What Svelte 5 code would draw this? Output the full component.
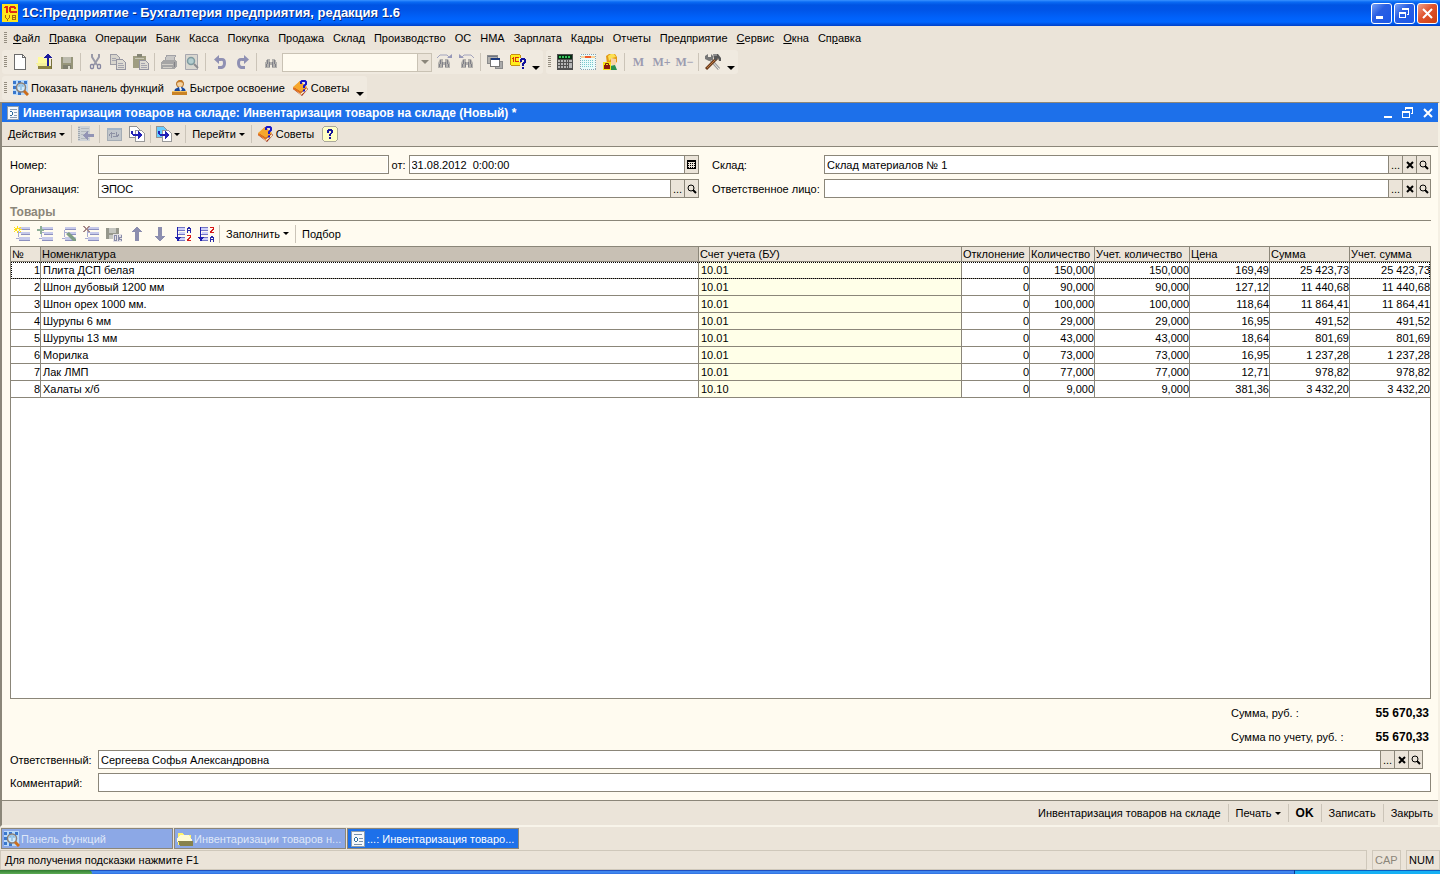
<script>
  const menu = [
    { text: 'Файл', key: 0 },
    { text: 'Правка', key: 0 },
    { text: 'Операции' },
    { text: 'Банк' },
    { text: 'Касса' },
    { text: 'Покупка' },
    { text: 'Продажа' },
    { text: 'Склад' },
    { text: 'Производство' },
    { text: 'ОС' },
    { text: 'НМА' },
    { text: 'Зарплата' },
    { text: 'Кадры' },
    { text: 'Отчеты' },
    { text: 'Предприятие' },
    { text: 'Сервис', key: 0 },
    { text: 'Окна', key: 0 },
    { text: 'Справка', key: 2 }
  ];

  const fileTools = [
    ['new', 'Новый'], ['open', 'Открыть'], ['save', 'Сохранить'], null,
    ['cut', 'Вырезать'], ['copy', 'Копировать'], ['paste', 'Вставить'], null,
    ['print', 'Печать'], ['preview', 'Просмотр'], null,
    ['undo', 'Отменить'], ['redo', 'Вернуть'], null,
    ['find', 'Найти']
  ];
  const findTools = [
    ['findNext', 'Найти далее'], ['findPrev', 'Найти назад'], null,
    ['windows', 'Окна'], ['help1c', 'Справка']
  ];
  const serviceTools = [
    ['calc', 'Калькулятор'], ['calendar', 'Календарь'], ['user', 'Пользователь'], null,
    ['m', 'M'], ['mPlus', 'M+'], ['mMinus', 'M-'], null,
    ['tools', 'Настройка']
  ];
  const tableTools = [
    ['rowAdd', 'Добавить'], ['rowCopy', 'Скопировать'], ['rowEdit', 'Изменить'],
    ['rowDelete', 'Удалить'], ['rowSave', 'Закончить'], ['up', 'Вверх'], ['down', 'Вниз'],
    ['sortAsc', 'По возрастанию'], ['sortDesc', 'По убыванию']
  ];

  // icons with diagonals and circles are drawn smooth, the rest on the pixel grid
  const smooth = ['panel', 'learn', 'tips', 'tools', 'cut', 'undo', 'redo', 'preview', 'rowEdit', 'findNext', 'findPrev', 'user'];

  const columns = [
    { title: '№', width: 30 },
    { title: 'Номенклатура' },
    { title: 'Счет учета (БУ)', width: 263 },
    { title: 'Отклонение', width: 68 },
    { title: 'Количество', width: 65 },
    { title: 'Учет. количество', width: 95 },
    { title: 'Цена', width: 80 },
    { title: 'Сумма', width: 80 },
    { title: 'Учет. сумма', width: 80 }
  ];

  const rows = [
    ['1', 'Плита ДСП белая', '10.01', '0', '150,000', '150,000', '169,49', '25 423,73', '25 423,73'],
    ['2', 'Шпон дубовый 1200 мм', '10.01', '0', '90,000', '90,000', '127,12', '11 440,68', '11 440,68'],
    ['3', 'Шпон орех 1000 мм.', '10.01', '0', '100,000', '100,000', '118,64', '11 864,41', '11 864,41'],
    ['4', 'Шурупы 6 мм', '10.01', '0', '29,000', '29,000', '16,95', '491,52', '491,52'],
    ['5', 'Шурупы 13 мм', '10.01', '0', '43,000', '43,000', '18,64', '801,69', '801,69'],
    ['6', 'Морилка', '10.01', '0', '73,000', '73,000', '16,95', '1 237,28', '1 237,28'],
    ['7', 'Лак ЛМП', '10.01', '0', '77,000', '77,000', '12,71', '978,82', '978,82'],
    ['8', 'Халаты х/б', '10.10', '0', '9,000', '9,000', '381,36', '3 432,20', '3 432,20']
  ];

  let selected = 0;
  let search = '';
  let number = '';
  let date = '31.08.2012  0:00:00';
  let organization = 'ЭПОС';
  let store = 'Склад материалов № 1';
  let person = '';
  let responsible = 'Сергеева Софья Александровна';
  let comment = '';
</script>

{#snippet binoculars()}
  <path d="M4 5h3v3h2V5h3l2 4v5H9v-3H7v3H2V9z" fill="#b3b1ad" />
  <path d="M4 6h1v4H4zM11 6h1v4h-1zM6 8h1v5H6zM9 8h1v5H9zM3 10h1v3H3zM12 10h1v3h-1z" fill="#808088" />
{/snippet}

{#snippet listRows()}
  <path d="M5 1h11v3H5zM7 6h9v3H7zM5 11h11v4H5z" fill="#c6c9ea" />
  <path d="M5 3h11v1H5zM7 8h9v1H7zM5 14h11v1H5z" fill="#8d90be" />
  <path d="M4 4h1v7H4zM5 6h2v1H5zM2 12h3v1H2z" fill="#a9acd2" />
{/snippet}

{#snippet icon(name)}
  <svg class="icon" width="16" height="16" viewBox="0 0 16 16" aria-hidden="true" shape-rendering={smooth.includes(name) ? 'auto' : 'crispEdges'}>
    {#if name === 'new'}
      <path d="M1.500.5h8l3 3v12h-11z" fill="#fff" stroke="#6c6c6c" />
      <path d="M9.500.5v3h3" fill="none" stroke="#6c6c6c" />
    {:else if name === 'open'}
      <path d="M2 3h5l1 2h6v9H2z" fill="#fffb9a" />
      <path d="M0 9h12l3 6H3z" fill="#f5f19b" />
      <path d="M2 12h13v3H2z" fill="#8c8340" />
      <path d="M15 5h1v10h-1z" fill="#77713a" />
      <path d="M11 12V4H8V3h1V2h1V1h1V0h2v1h1v1h1v1h1v1h-3v8z" fill="#1c1c9c" />
    {:else if name === 'save'}
      <path d="M2 3h12v12H2z" fill="#96957a" />
      <path d="M4 3h8v6H4z" fill="#bcbbae" />
      <path d="M4 11h8v4H4z" fill="#7f7f70" />
      <path d="M9 12h2v3H9z" fill="#dddcd0" />
    {:else if name === 'cut'}
      <path d="M5 0v3l5 8M12 0v3l-5 8" fill="none" stroke="#9a9aa8" stroke-width="2" />
      <rect x="3.500" y="10.500" width="3" height="4" rx="1" fill="none" stroke="#8686a0" stroke-width="1.300" />
      <rect x="10.500" y="10.500" width="3" height="4" rx="1" fill="none" stroke="#8686a0" stroke-width="1.300" />
    {:else if name === 'copy'}
      <path d="M.5.5h6l3 3v7h-9z" fill="#d8d5cd" stroke="#9c9ca4" />
      <path d="M6.500 5.500h6l3 3v7h-9z" fill="#dedbd3" stroke="#9595a0" />
      <path d="M2 4.500h4M2 6.500h4M8 9.500h5M8 11.500h6M8 13.500h6" stroke="#a5a5af" />
    {:else if name === 'paste'}
      <path d="M0 2h13v12H0z" fill="#9f9d82" />
      <path d="M4 0h5v3H4z" fill="#868676" />
      <path d="M2 4h9v1H2z" fill="#c8c6b5" />
      <path d="M6.500 6.500h6l3 3v6h-9z" fill="#dedbd3" stroke="#9595a0" />
      <path d="M8 9.500h4M8 11.500h6M8 13.500h6" stroke="#a5a5af" />
    {:else if name === 'print'}
      <path d="M5.500 1.500h9l-2 6h-9z" fill="#c8c7c5" stroke="#a2a2a6" />
      <path d="M0 8l3-2h12l1 2v5l-3 2H0z" fill="#a5a5a5" />
      <path d="M1 10.500h11M2 13.500h9" stroke="#d2cfc8" />
      <path d="M13 8h1v5h-1z" fill="#838388" />
    {:else if name === 'preview'}
      <path d="M1.500.5h12v15h-12z" fill="#d9d7d0" stroke="#a7a7ae" />
      <circle cx="7" cy="7" r="3.500" fill="#b3cdcf" stroke="#7f9ba0" stroke-width="1.500" />
      <path d="M10 10l4 4" stroke="#8c8c90" stroke-width="2" />
    {:else if name === 'undo'}
      <path d="M2 5.500L7 1v3h3q4 0 4 5t-4 6H6v-3h3q2 0 2-3T9 7H7v3z" fill="#8f90b3" />
    {:else if name === 'redo'}
      <path d="M14 5.500L9 1v3H6q-4 0-4 5t4 6h4v-3H7q-2 0-2-3t2-2h2v3z" fill="#8f90b3" />
    {:else if name === 'find'}
      {@render binoculars()}
    {:else if name === 'findNext'}
      {@render binoculars()}
      <path d="M1 4l3-3h7l3 3" fill="none" stroke="#a3a4bd" />
      <path d="M11 4h5V0z" fill="#9798b8" />
    {:else if name === 'findPrev'}
      {@render binoculars()}
      <path d="M2 4l3-3h7l3 3" fill="none" stroke="#a3a4bd" />
      <path d="M5 4H0V0z" fill="#9798b8" />
    {:else if name === 'windows'}
      <path d="M.5 1.500h10v8H.5z" fill="#b2b1ae" stroke="#8b8b8b" />
      <path d="M1 2h9v1H1z" fill="#6e7583" />
      <path d="M8.500 7.500h7v7h-7z" fill="#aaa" stroke="#8b8b8b" />
      <path d="M3.500 4.500h9v8h-9z" fill="#fff" stroke="#757575" />
      <path d="M4 4h9v2H4z" fill="#1b3a80" />
    {:else if name === 'help1c'}
      <path d="M.5 1.500l1-1h8l1 1v9l-1 1h-8l-1-1z" fill="#ffee1c" stroke="#c78f10" />
      <path d="M2 4h1V3h1v5H3V5H2zM5 3h4v1H6v3h4v1H5z" fill="#d8300f" />
      <path d="M9 4h6l1 1v4l-2 2v5h-4v-6l1-2H9z" fill="#f0eae0" />
      <path d="M10 5h1V4h4v1h1v4h-1v1h-1v2h-2V9h1V8h1V6h-2v2h-2zM12 13h2v2h-2z" fill="#12129c" />
    {:else if name === 'calc'}
      <path d="M0 0h16v16H0z" fill="#505050" />
      <path d="M1 1h14v4H1z" fill="#062d12" />
      <path d="M2 3h12" stroke="#35c65c" stroke-width="2" stroke-dasharray="2 1" />
      <path d="M1 7h10M1 10h10M1 13h10" stroke="#b5b5b5" stroke-width="2" stroke-dasharray="2 1" />
      <path d="M12 6h3v2h-3zM12 9h3v5h-3z" fill="#b7b7b7" />
    {:else if name === 'calendar'}
      <path d="M0 0h16v16H0z" fill="#e9fbfb" />
      <path d="M.5.5h15v15H.5z" fill="none" stroke="#8e9fac" stroke-dasharray="1 1" />
      <path d="M1 2h14v2H1z" fill="#fad29a" />
      <path d="M5 2h6v2H5z" fill="#f05b2c" />
      <path d="M2 6.500h12M2 8.500h12M2 10.500h12M2 12.500h12" stroke="#79c8cc" stroke-dasharray="1 1" />
    {:else if name === 'user'}
      <path d="M3 2l3-2h6l2 3v5l-3 2H4z" fill="#e39a14" />
      <path d="M5 2l3-2h3l2 3-4 1-3 3z" fill="#fbe054" />
      <path d="M8 4l5 1v5l-2 2-3-2z" fill="#f8d2a4" />
      <path d="M7 12l5-1 2 5H7z" fill="#2a9050" />
      <path d="M0 8h8v8H0z" fill="#f6e51a" />
      <path d="M2.500 11V9.500h3V11" fill="none" stroke="#7d1808" />
      <path d="M1 11h6v4H1z" fill="#8d1d0c" />
    {:else if name === 'tools'}
      <path d="M5 5l9 10" stroke="#9b9b9b" stroke-width="3" />
      <path d="M5 5l9 10" stroke="#eee" />
      <path d="M12 4L1 15" stroke="#6d3c1c" stroke-width="3" />
      <path d="M11 5L2 14" stroke="#bb7a42" />
      <path d="M0 2l3-2v3h3V0l2 2v4L4 7 0 5z" fill="#777" />
      <path d="M8 0h5l3 4v3h-2l-1-3-2 3-2-2z" fill="#575757" />
      <path d="M8 1h4" stroke="#bdbdbd" />
    {:else if name === 'panel'}
      <path d="M0 0h15v15H0z" fill="#b9dafa" />
      <path d="M0 1h3v3H0zM5 1h3v3H5zM11 1h3v3h-3zM0 6h3v3H0zM0 11h3v3H0zM5 12h3v3H5z" fill="#3977cc" />
      <circle cx="8" cy="7.500" r="4.500" fill="#cfeafc" stroke="#8a7f76" stroke-width="1.500" />
      <path d="M6 7V5h4v2M8 6v4" fill="none" stroke="#71a9d6" />
      <path d="M11 11l4 4" stroke="#cc6e1c" stroke-width="3" />
    {:else if name === 'learn'}
      <circle cx="8" cy="4" r="3.500" fill="#f6d3a0" stroke="#b06c22" />
      <path d="M4 3l3-3h3l2 3-4-1z" fill="#c47c2a" />
      <path d="M2 12l1-3 4-2h3l3 2 1 3z" fill="#17479d" />
      <path d="M7 7h2l1 3-2 1z" fill="#e8f0fb" />
      <path d="M0 11h15v4H0z" fill="#c98326" />
      <path d="M0 11h15v1H0z" fill="#f4c363" />
    {:else if name === 'tips'}
      <path d="M0 9l7-8 8 8-6 7z" fill="#a3331a" />
      <path d="M0 7l7-6 7 6-6 5z" fill="#f6a72c" />
      <path d="M0 8l8 5 6-5v2l-6 5z" fill="#fff0c5" />
      <path d="M0 7l8 5v2L0 9z" fill="#e2711d" />
      <path d="M8 4V2l1-1h3l1 1v2l-2 2v2M11 9.500v2" fill="none" stroke="#1717c8" stroke-width="2" />
    {:else if name === 'document'}
      <path d="M1 0h14v16H1z" fill="#8c9dae" />
      <path d="M2 1h12v14H2z" fill="#f5f8fb" />
      <path d="M4 3.500h8M9 7.500h4M9 10.500h4M4 13.500h8" stroke="#7890aa" />
      <path d="M5 6h2v1h1v3H7v1H5v-1H4V7h1z" fill="#2d6c9c" />
      <path d="M5 7h2v3H5z" fill="#fff" />
    {:else if name === 'folder'}
      <path d="M1 2h5l1 2h7v10H1z" fill="#fff36d" />
      <path d="M0 8l3-4h9l3 5v2H0z" fill="#fffbd5" />
      <path d="M1 10h15v5H3z" fill="#87824d" />
    {:else if name === 'toList'}
      <path d="M0 0h12v15H0z" fill="#cdd1d5" />
      <path d="M1 1v13" stroke="#a1a8ae" stroke-width="2" stroke-dasharray="1 1" />
      <path d="M3 2.500h8M3 5.500h8M3 8.500h8M3 12.500h8" stroke="#b2b8be" />
      <path d="M5 9h1V8h1V7h1V6h1V5h1v3h6v3h-6v3H9v-1H8v-1H7v-1H6v-1H5z" fill="#9294b5" />
    {:else if name === 'refresh'}
      <path d="M1 2h14v12H1z" fill="#c1c6cb" stroke="#a4acb4" />
      <path d="M1 3h14" stroke="#a2b4c7" stroke-width="2" />
      <path d="M5.500 12V7.500H9M3 9.500l2.500-3M10.500 5.500v5H7M13 8.500l-2.500 3" fill="none" stroke="#8d91a4" />
    {:else if name === 'copyDoc' || name === 'basedOn'}
      <path d="M.5.5h7l3 3v8H.5z" fill={name === 'basedOn' ? '#67ccff' : '#fff'} stroke="#929292" />
      <path d="M6.500 4.500h6l3 3v8h-9z" fill="#fff" stroke="#999" />
      <path d="M2 5h2v3h5V5h1v1h1v1h1v1h1v2h-1v1h-1v1h-1v1H9v-3H4V9H3V8H2z" fill="#2222b5" />
    {:else if name === 'rowAdd'}
      {@render listRows()}
      <path d="M3 0h1v2h2V1h1v1H6v1h2v1H6v1h1v1H6V5H4v2H3V5H1v1H0V5h1V4H0V3h1V2H0V1h1v1h2z" fill="#ffdf18" />
      <path d="M3 3h2v2H3z" fill="#fffbd0" />
    {:else if name === 'rowCopy'}
      {@render listRows()}
      <path d="M0 3h7v2H0zM3 0h2v8H3z" fill="#8fae97" />
    {:else if name === 'rowEdit'}
      {@render listRows()}
      <path d="M6 8l3-2 7 7v2h-3z" fill="#7f9d84" />
    {:else if name === 'rowDelete'}
      {@render listRows()}
      <path d="M0 0h2v1h1v1h1V1h1V0h2v1H6v1H5v2h1v1h1v1H5V5H4V4H3v1H2v1H0V5h1V4h1V2H1V1H0z" fill="#a58888" />
    {:else if name === 'rowSave'}
      <path d="M0 2h13v11H0z" fill="#96978c" />
      <path d="M3 2h7v5H3zM3 9h6v4H3z" fill="#c5c6c0" />
      <path d="M7 8h9v8H7z" fill="#e4e1e4" />
      <path d="M8.500 9.500h2v5h-2zM12.500 9v6M15.500 9v2h-2v2h2v2" fill="none" stroke="#898ca8" />
    {:else if name === 'up'}
      <path d="M7 1h2v1h1v1h1v1h1v1h1v1h-3v9H6V6H3V5h1V4h1V3h1V2h1z" fill="#8c8eaf" />
    {:else if name === 'down'}
      <path d="M7 15h2v-1h1v-1h1v-1h1v-1h1v-1h-3V1H6v9H3v1h1v1h1v1h1v1h1z" fill="#8c8eaf" />
    {:else if name === 'sortAsc' || name === 'sortDesc'}
      <path d="M2 1h8v3H2zM4 6h6v3H4zM4 11h6v4H4z" fill="#cdd0fa" />
      <path d="M2 1h8v1H2zM3 4h7v1H3zM3 8h7v1H3zM3 11h7v1H3zM4 14h6v1H4z" fill="#7376c4" />
      <path d="M2 1h1v10h3v1H5v1H4v2H2v-2H1v-1H0v-1h2z" fill="#1e1fae" />
      <path d="M12.500 7V2.500h3V7M12 4.500h4M13 1.500h2" fill="none" stroke="#2829aa" transform={name === 'sortDesc' ? 'translate(0 9)' : null} />
      <path d="M12 9.500h3.500v1.500h-1v1h-1v1h-1v1.500H16" fill="none" stroke="#d71919" transform={name === 'sortDesc' ? 'translate(0 -8)' : null} />
    {:else if name === 'help'}
      <path d="M2.500.5h11l2 2v11l-2 2h-11l-2-2v-11z" fill="#ffffc4" stroke="#aaa89c" />
      <path d="M5 4h1V3h4v1h1v3h-1v1H9v2H7V8h1V7h1V5H7v2H5zM7 11h2v2H7z" fill="#15159b" />
    {/if}
  </svg>
{/snippet}

{#snippet tools(list)}
  {#each list as item}
    {#if !item}
      <span class="sep"></span>
    {:else}
      <button class="tool" aria-label={item[1]}>
        {#if item[0] === 'm'}
          <span class="mem">M</span>
        {:else if item[0] === 'mPlus'}
          <span class="mem">M+</span>
        {:else if item[0] === 'mMinus'}
          <span class="mem">M−</span>
        {:else}
          {@render icon(item[0])}
        {/if}
      </button>
    {/if}
  {/each}
{/snippet}

{#snippet pick()}
  <button class="pick" aria-label="Выбрать">...</button>
{/snippet}

{#snippet clear()}
  <button class="pick" aria-label="Очистить">
    <svg width="8" height="8" viewBox="0 0 8 8"><path d="M1 1l6 6M7 1L1 7" stroke="#000" stroke-width="2" /></svg>
  </button>
{/snippet}

{#snippet lens()}
  <button class="pick" aria-label="Открыть">
    <svg width="10" height="10" viewBox="0 0 10 10">
      <circle cx="4" cy="4" r="3" fill="none" stroke="#000" />
      <path d="M6 6l3 3" stroke="#000" stroke-width="2" />
    </svg>
  </button>
{/snippet}

<div class="app">
  <header class="titlebar">
    <svg class="logo" width="16" height="18" viewBox="0 0 16 18" shape-rendering="crispEdges">
      <rect width="16" height="18" rx="1" fill="#ffe61c" />
      <path d="M2 3h1V2h3v7H4V4H2zM8 2h5v1h1v2h-2V4H9v3h6v2H8V8H7V3h1z" fill="#e02a12" />
      <path d="M3.500 11v2l2 3 2-3v-2M10.500 11.500h3v4h-3zM10 13.500h4" fill="none" stroke="#a8660f" />
    </svg>
    <h1>1С:Предприятие - Бухгалтерия предприятия, редакция 1.6</h1>
    <div class="caption-buttons">
      <button class="caption" aria-label="Свернуть">
        <svg width="19" height="19" viewBox="0 0 19 19"><path d="M4 12h7v3H4z" fill="#fff" /></svg>
      </button>
      <button class="caption" aria-label="Восстановить">
        <svg width="19" height="19" viewBox="0 0 19 19" shape-rendering="crispEdges">
          <path d="M7 4h7v2H7zM4 8h7v2H4z" fill="#fff" />
          <path d="M7.500 6V4.500h6v6H12M4.500 8.500h6v5h-6z" fill="none" stroke="#fff" />
        </svg>
      </button>
      <button class="caption close" aria-label="Закрыть">
        <svg width="19" height="19" viewBox="0 0 19 19"><path d="M5 5l9 9M14 5l-9 9" stroke="#fff" stroke-width="2" /></svg>
      </button>
    </div>
  </header>

  <nav class="menu">
    <span class="grip"></span>
    {#each menu as item}
      <a href="#menu">{#if item.key === undefined}{item.text}{:else}{item.text.slice(0, item.key)}<u>{item.text[item.key]}</u>{item.text.slice(item.key + 1)}{/if}</a>
    {/each}
  </nav>

  <div class="bars">
    <div class="bar">
      <span class="grip"></span>
      {@render tools(fileTools)}
      <div class="combo">
        <input type="text" aria-label="Поиск" bind:value={search} />
        <button aria-label="История поиска"><span class="arrow muted"></span></button>
      </div>
      {@render tools(findTools)}
      <button class="more" aria-label="Еще"><span class="arrow big"></span></button>
    </div>
    <div class="bar">
      <span class="grip"></span>
      {@render tools(serviceTools)}
      <button class="more" aria-label="Еще"><span class="arrow big"></span></button>
    </div>
  </div>

  <div class="bars">
    <div class="bar">
      <span class="grip"></span>
      <button class="command">{@render icon('panel')}Показать панель функций</button>
      <button class="command">{@render icon('learn')}Быстрое освоение</button>
      <button class="command">{@render icon('tips')}Советы</button>
      <button class="more" aria-label="Еще"><span class="arrow big"></span></button>
    </div>
  </div>

  <main class="window">
    <div class="window-title">
      {@render icon('document')}
      <h2>Инвентаризация товаров на складе: Инвентаризация товаров на складе (Новый) *</h2>
      <button aria-label="Свернуть окно">
        <svg width="12" height="12" viewBox="0 0 12 12"><path d="M2 9h8v2H2z" fill="#fff" /></svg>
      </button>
      <button aria-label="Восстановить окно">
        <svg width="12" height="12" viewBox="0 0 12 12" shape-rendering="crispEdges">
          <path d="M3.500 3V.5h7v6H9M.5 4.500h7v6h-7z" fill="none" stroke="#fff" />
          <path d="M3 0h8v2H3zM0 4h8v2H0z" fill="#fff" />
        </svg>
      </button>
      <button aria-label="Закрыть окно">
        <svg width="12" height="12" viewBox="0 0 12 12"><path d="M2 2l8 8M10 2l-8 8" stroke="#fff" stroke-width="2" /></svg>
      </button>
    </div>

    <div class="form-bar">
      <button class="text-button">Действия<span class="arrow"></span></button>
      <span class="sep"></span>
      <button class="tool" aria-label="Найти в списке">{@render icon('toList')}</button>
      <span class="sep"></span>
      <button class="tool" aria-label="Перечитать">{@render icon('refresh')}</button>
      <button class="tool" aria-label="Скопировать">{@render icon('copyDoc')}</button>
      <span class="sep"></span>
      <button class="tool with-arrow" aria-label="Ввести на основании">{@render icon('basedOn')}<span class="arrow"></span></button>
      <span class="sep"></span>
      <button class="text-button">Перейти<span class="arrow"></span></button>
      <span class="sep"></span>
      <button class="command">{@render icon('tips')}Советы</button>
      <button class="tool" aria-label="Справка">{@render icon('help')}</button>
    </div>

    <div class="form">
      <div class="fields">
        <div class="row">
          <label class="wide" for="number">Номер:</label>
          <div class="field"><input id="number" class="readonly" type="text" bind:value={number} readonly /></div>
          <label class="from" for="date">от:</label>
          <div class="field">
            <input id="date" type="text" bind:value={date} />
            <button class="pick" aria-label="Календарь">
              <svg width="9" height="9" viewBox="0 0 9 9" shape-rendering="crispEdges">
                <path d="M0 0h9v9H0z" />
                <path d="M1 2h7v6H1z" fill="#ebe4d9" />
                <path d="M1 3.500h7M1 5.500h7M1 7.500h7" stroke="#000" stroke-dasharray="1 1" />
              </svg>
            </button>
          </div>
        </div>
        <div class="row">
          <label class="store" for="store">Склад:</label>
          <div class="field">
            <input id="store" type="text" bind:value={store} />
            {@render pick()}{@render clear()}{@render lens()}
          </div>
        </div>
        <div class="row">
          <label class="wide" for="organization">Организация:</label>
          <div class="field">
            <input id="organization" type="text" bind:value={organization} />
            {@render pick()}{@render lens()}
          </div>
        </div>
        <div class="row">
          <label class="store" for="person">Ответственное лицо:</label>
          <div class="field">
            <input id="person" type="text" bind:value={person} />
            {@render pick()}{@render clear()}{@render lens()}
          </div>
        </div>
      </div>

      <h3>Товары</h3>

      <div class="table-bar">
        {@render tools(tableTools)}
        <span class="sep"></span>
        <button class="text-button">Заполнить<span class="arrow"></span></button>
        <span class="sep"></span>
        <button class="text-button">Подбор</button>
      </div>

      <div class="table-box">
        <table>
          <colgroup>
            {#each columns as column}
              <col style={column.width ? `width: ${column.width}px` : null} />
            {/each}
          </colgroup>
          <thead>
            <tr>
              {#each columns as column, i}
                <th class:active={i === 1}>{column.title}</th>
              {/each}
            </tr>
          </thead>
          <tbody>
            {#each rows as row, r}
              <tr class:selected={r === selected} on:click={() => (selected = r)}>
                {#each row as cell, i}
                  <td class:num={i !== 1 && i !== 2} class:account={i === 2}>{cell}</td>
                {/each}
              </tr>
            {/each}
          </tbody>
        </table>
      </div>

      <dl class="totals">
        <dt>Сумма, руб. :</dt>
        <dd>55 670,33</dd>
        <dt>Сумма по учету, руб. :</dt>
        <dd>55 670,33</dd>
      </dl>

      <div class="row short">
        <label class="wide" for="responsible">Ответственный:</label>
        <div class="field">
          <input id="responsible" type="text" bind:value={responsible} />
          {@render pick()}{@render clear()}{@render lens()}
        </div>
      </div>
      <div class="row">
        <label class="wide" for="comment">Комментарий:</label>
        <div class="field"><input id="comment" type="text" bind:value={comment} /></div>
      </div>
    </div>

    <div class="actions">
      <button class="text-button">Инвентаризация товаров на складе</button>
      <span class="sep"></span>
      <button class="text-button">Печать<span class="arrow"></span></button>
      <span class="sep"></span>
      <button class="text-button ok">OK</button>
      <span class="sep"></span>
      <button class="text-button">Записать</button>
      <span class="sep"></span>
      <button class="text-button">Закрыть</button>
    </div>
  </main>

  <div class="tabs">
    <button class="tab">{@render icon('panel')}<span>Панель функций</span></button>
    <button class="tab">{@render icon('folder')}<span>Инвентаризации товаров н...</span></button>
    <button class="tab current">{@render icon('document')}<span>...: Инвентаризация товаро...</span></button>
  </div>

  <footer class="status">
    <span class="hint">Для получения подсказки нажмите F1</span>
    <span class="lamp off">CAP</span>
    <span class="lamp">NUM</span>
  </footer>

  <div class="taskbar">
    <span class="start"></span>
    <span class="tray"></span>
  </div>
</div>

<style>
  :global(body) {
    margin: 0;
    background: #ebe4d9;
  }

  .app {
    display: flex;
    flex-direction: column;
    min-height: 100vh;
    font-family: 'Liberation Sans', Arial, sans-serif;
    font-size: 11px;
    line-height: 14px;
    color: #000;
  }

  .app * {
    box-sizing: border-box;
  }

  button,
  input {
    font: inherit;
    color: inherit;
    margin: 0;
    padding: 0;
    border: none;
    background: none;
    border-radius: 0;
  }

  button {
    display: flex;
    align-items: center;
    justify-content: center;
    white-space: nowrap;
  }

  svg {
    display: block;
    flex: none;
  }

  h1,
  h2,
  h3 {
    margin: 0;
  }

  .titlebar {
    display: flex;
    align-items: center;
    height: 26px;
    padding: 0 2px;
    background: linear-gradient(#3a93ff 0, #0a6bf4 2px, #0054e3 5px, #0055e8 10px, #0062fb 18px, #0066ff 22px, #0040c8 26px);
  }

  h1 {
    flex: 1;
    margin-left: 4px;
    font-size: 13px;
    line-height: 18px;
    color: #fff;
    text-shadow: 1px 1px 0 #0a2a80;
  }

  .caption-buttons {
    display: flex;
    gap: 2px;
  }

  .caption {
    width: 21px;
    height: 21px;
    border: 1px solid #fff;
    border-radius: 3px;
    background: linear-gradient(135deg, #7ba2f5, #2a5fe3 40%, #1b57e8);
  }

  .caption.close {
    background: linear-gradient(135deg, #f0a18c, #e0532c 45%, #cd3f10);
  }

  .menu {
    display: flex;
    align-items: center;
    gap: 9px;
    height: 24px;
    padding-left: 2px;
  }

  .menu a {
    color: #000;
    text-decoration: none;
  }

  .grip {
    flex: none;
    width: 3px;
    height: 12px;
    margin: 0 2px;
    background: repeating-linear-gradient(#948d80 0 1px, transparent 1px 2px);
  }

  .menu .grip {
    margin-right: -3px;
  }

  .bars {
    display: flex;
    gap: 3px;
    height: 26px;
    padding-left: 2px;
  }

  .bar {
    display: flex;
    align-items: center;
    height: 24px;
    background: #f0eae0;
    border-radius: 3px;
  }

  .tool {
    width: 23px;
    height: 22px;
    flex: none;
  }

  .tool.with-arrow {
    width: 30px;
    gap: 2px;
  }

  .mem {
    font: bold 12px 'Liberation Serif', serif;
    color: #9c9cb0;
  }

  .sep {
    flex: none;
    width: 1px;
    height: 18px;
    margin: 0 2px;
    background: #cbc4b8;
  }

  .combo {
    display: flex;
    width: 150px;
    height: 19px;
    border: 1px solid #c9c2b4;
    background: #fffbf0;
  }

  .combo input {
    flex: 1;
    min-width: 0;
  }

  .combo button {
    width: 14px;
    border-left: 1px solid #c9c2b4;
    background: #ebe4d9;
  }

  .arrow {
    flex: none;
    border: 3px solid transparent;
    border-top-color: #000;
    border-bottom: none;
  }

  .arrow.big {
    border-width: 4px;
    border-bottom: none;
  }

  .arrow.muted {
    border-width: 4px;
    border-bottom: none;
    border-top-color: #8b867b;
  }

  .more {
    width: 14px;
    height: 24px;
    padding-bottom: 4px;
    align-items: flex-end;
  }

  .command {
    height: 22px;
    gap: 2px;
    padding: 0 4px;
  }

  .text-button {
    height: 22px;
    gap: 3px;
    padding: 0 4px;
  }

  .window {
    flex: 1;
    display: flex;
    flex-direction: column;
    border: solid #8b8679;
    border-width: 1px 0 0 2px;
    border-right: 2px solid #f5f0e4;
    border-bottom: 2px solid #f8f4ea;
  }

  .window-title {
    display: flex;
    align-items: center;
    height: 19px;
    padding-left: 2px;
    color: #fff;
    background: #1d70ea;
  }

  .window-title .icon {
    width: 14px;
    height: 14px;
    margin-left: 2px;
  }

  h2 {
    flex: 1;
    margin-left: 3px;
    font-size: 12px;
    line-height: 16px;
  }

  .window-title button {
    width: 20px;
    height: 16px;
  }

  .form-bar {
    display: flex;
    align-items: center;
    height: 25px;
    padding: 0 2px;
    border-bottom: 1px solid #8b8679;
  }

  .form {
    flex: 1;
    display: flex;
    flex-direction: column;
    padding: 8px 7px 8px 8px;
    background: #fffbf0;
    border-bottom: 1px solid #8b8679;
  }

  .fields {
    display: grid;
    grid-template-columns: 689fr 719fr;
    gap: 5px 13px;
  }

  .row {
    display: flex;
    align-items: center;
  }

  .row.short {
    margin-right: 8px;
    margin-bottom: 4px;
  }

  .wide {
    flex: none;
    width: 88px;
  }

  .from {
    flex: none;
    width: 20px;
    padding-left: 3px;
  }

  .store {
    flex: none;
    width: 112px;
  }

  .field {
    flex: 1;
    display: flex;
    height: 19px;
    border: 1px solid #8b8679;
    background: #fff;
  }

  .field input {
    flex: 1;
    min-width: 0;
    padding: 0 2px;
    white-space: pre;
  }

  .field input.readonly {
    margin: 1px;
    background: #fffbf0;
  }

  .pick {
    flex: none;
    width: 14px;
    border-left: 1px solid #8b8679;
    background: #ebe4d9;
  }

  h3 {
    margin-top: 7px;
    border-bottom: 1px solid #8b8679;
    font-size: 12px;
    line-height: 15px;
    color: #8b8679;
  }

  .table-bar {
    display: flex;
    align-items: center;
    height: 25px;
  }

  .table-box {
    flex: 1;
    border: 1px solid #8b8679;
    background: #fff;
  }

  table {
    width: 100%;
    table-layout: fixed;
    border-collapse: separate;
    border-spacing: 0;
  }

  th,
  td {
    height: 17px;
    padding: 0 1px;
    border: solid #8b8679;
    border-width: 0 1px 1px 0;
    text-align: left;
    font-weight: normal;
    line-height: 14px;
    white-space: nowrap;
    overflow: hidden;
  }

  th:last-child,
  td:last-child {
    border-right: none;
  }

  th {
    height: 15px;
    background: #ebe4d9;
  }

  th.active {
    background: #c8c0b4;
  }

  td {
    padding: 0 2px;
  }

  td.num {
    text-align: right;
    padding: 0;
  }

  td.account {
    background: #ffffe8;
  }

  tr.selected {
    outline: 1px dotted #000;
    outline-offset: -1px;
  }

  .totals {
    display: grid;
    grid-template-columns: 120px 78px;
    justify-content: end;
    margin: 2px 2px 1px 0;
    line-height: 24px;
  }

  .totals dd {
    margin: 0;
    font-size: 12px;
    font-weight: bold;
    text-align: right;
  }

  .actions {
    display: flex;
    align-items: center;
    justify-content: flex-end;
    height: 24px;
  }

  .actions .text-button {
    padding: 0 5px;
  }

  .ok {
    font-size: 12px;
    font-weight: bold;
  }

  .tabs {
    display: flex;
    gap: 1px;
    padding: 1px;
  }

  .tab {
    justify-content: flex-start;
    gap: 1px;
    width: 172px;
    height: 21px;
    padding: 0 2px;
    border: 1px solid #8b8679;
    color: #dfe7f8;
    background: #8ca8e6;
  }

  .tab.current {
    color: #fff;
    background: #1d70ea;
  }

  .status {
    display: flex;
    gap: 5px;
    height: 20px;
  }

  .status span {
    padding: 2px;
    border: 1px solid #cfc8bb;
  }

  .status .hint {
    flex: 1;
    padding-left: 4px;
  }

  .lamp {
    width: 34px;
    white-space: nowrap;
  }

  .lamp.off {
    width: 29px;
    color: #8b8679;
  }

  .taskbar {
    display: flex;
    justify-content: space-between;
    height: 4px;
    background: linear-gradient(#1f4fc0 1px, #3f86ee 1px 3px, #2a66dc);
  }

  .start {
    width: 92px;
    background: linear-gradient(#2f7a2f, #5eac56);
    border-top-right-radius: 4px;
  }

  .tray {
    width: 146px;
    border-left: 1px solid #0a3a90;
    background: linear-gradient(#0a5fc0 1px, #16b0f4 1px);
  }
</style>
